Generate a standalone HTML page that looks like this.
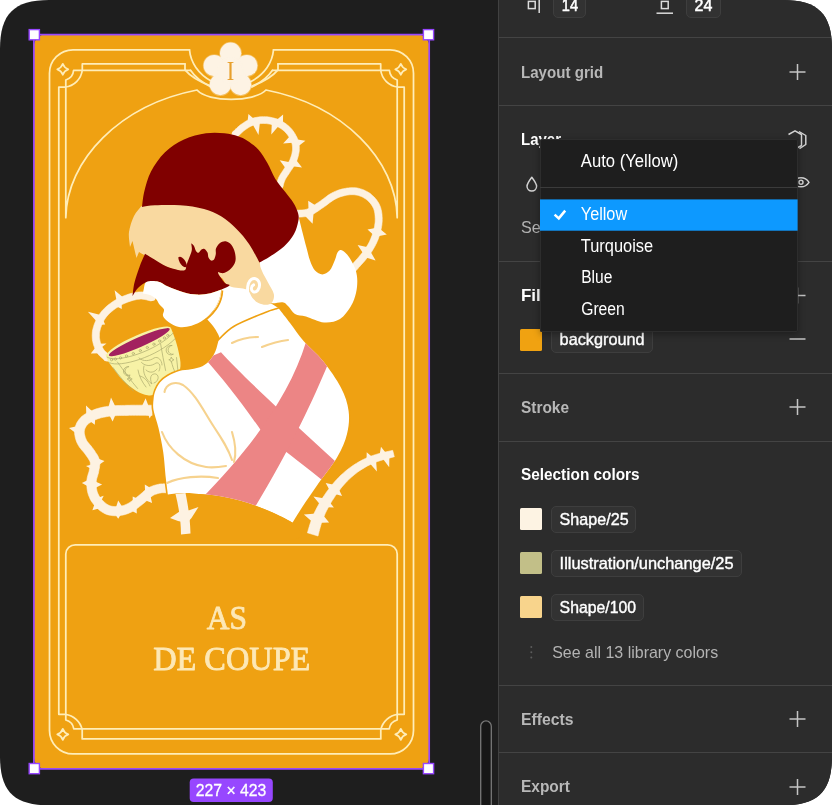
<!DOCTYPE html>
<html lang="en">
<head>
<meta charset="utf-8">
<title>Figma – Layer mode dropdown</title>
<style>
html,body{margin:0;padding:0;background:#fff;}
body{width:833px;height:806px;overflow:hidden;position:relative;font-family:"Liberation Sans",Arial,sans-serif;}
#win{position:absolute;left:0;top:0;width:832px;height:805.3px;background:#1e1e1e;overflow:hidden;clip-path:path('M49 0 H783 C818 0 832 14 832 49 V756.3 C832 791.3 818 805.3 783 805.3 H49 C14 805.3 0 791.3 0 756.3 V49 C0 14 14 0 49 0Z');}
#panel{position:absolute;left:497.5px;top:0;width:335px;height:805px;background:#2c2c2c;border-left:1.4px solid #414141;box-sizing:border-box;}
.hr{position:absolute;left:499px;width:333px;height:1px;background:#444;}
.t{position:absolute;white-space:nowrap;line-height:20px;height:20px;font-size:15px;letter-spacing:-0.1px;}
.b{font-weight:bold;}
.dim{color:#b3b3b3;}
.wh{color:#fff;}
.plus{position:absolute;width:15px;height:15px;}
.plus:before{content:"";position:absolute;left:0;top:7px;width:15px;height:1.4px;background:#c8c8c8;}
.plus:after{content:"";position:absolute;left:7px;top:0;width:1.4px;height:15px;background:#c8c8c8;}
.minus{position:absolute;width:15px;height:1.4px;background:#c8c8c8;}
.chip{position:absolute;height:25px;border:1px solid #3e3e3e;border-radius:5px;box-sizing:content-box;background:#323232;}
.sw{position:absolute;width:22.4px;height:22px;border-radius:1.5px;}
#dd{position:absolute;left:540px;top:139px;width:257.6px;height:193.4px;background:#1e1e1e;border-radius:2px;box-shadow:0 2px 7px rgba(0,0,0,.35), inset 0 0 0 1px #2d2d2d;}
</style>
</head>
<body>
<div id="win">

<!-- ===== canvas: card ===== -->
<svg id="card" style="position:absolute;left:0;top:0;will-change:transform" width="498" height="805" viewBox="0 0 498 805">
  <rect x="33.9" y="34.6" width="395.3" height="734.3" rx="11.5" fill="#efa112"/>
  <!--FRAME-START-->
  <!-- frame ornaments -->
  <g id="frame" fill="none" stroke="#ffedb8" stroke-width="1.75" stroke-linejoin="round" stroke-linecap="round">
    <!-- outer line with dip under flower -->
    <path d="M189.5 49.8 H73 A23.5 23.5 0 0 0 49.5 73.3 V730.4 A23.5 23.5 0 0 0 73 753.9 H390 A23.5 23.5 0 0 0 413.5 730.4 V73.3 A23.5 23.5 0 0 0 390 49.8 H273.5"/>
    <path d="M189.5 49.8 C190.5 62 198 74 212 81.5"/>
    <path d="M273.5 49.8 C272.5 62 265 74 251 81.5"/>
    <!-- line A (outer of the double) -->
    <path d="M185 63.9 H82.3 V70 A19.4 19.4 0 0 1 65 87 H58.8 V714.3 H65.4 A20 20 0 0 1 82.2 729.5 V738.9 H380.8 V729.5 A20 20 0 0 1 397.6 714.3 H404.2 V87 H398 A19.4 19.4 0 0 1 380.7 70 V63.9 H278"/>
    <path d="M185 63.9 V69.9 Q193 79.5 211 86"/>
    <path d="M278 63.9 V69.9 Q270 79.5 252 86"/>
    <!-- line B (inner of the double) top part + arch -->
    <path d="M190.5 70.3 H73.6 A11 11 0 0 1 65.8 80 V217.7 C66.5 160 120 105 197 90 C208 102.5 254 102.5 266 90 C343 105 396.5 160 397.2 217.7 V80 A11 11 0 0 1 389.4 70.3 H272.5"/>
    <path d="M190.5 70.3 Q197 80 211 87"/>
    <path d="M272.5 70.3 Q266 80 252 87"/>
    <!-- text box + bottom part of line B -->
    <path d="M73.8 728.8 A11 11 0 0 0 65.8 720 V554 A9.5 9.5 0 0 1 75.3 544.8 H387.7 A9.5 9.5 0 0 1 397.2 554 V720 A11 11 0 0 0 389.2 728.8 Z"/>
    <!-- corner diamonds -->
    <path id="dia" d="M62.8 63.8 Q64.2 67.9 68.3 69.3 Q64.2 70.7 62.8 74.8 Q61.4 70.7 57.3 69.3 Q61.4 67.9 62.8 63.8Z"/>
    <use href="#dia" x="338"/>
    <use href="#dia" y="665.1"/>
    <use href="#dia" x="338" y="665.1"/>
  </g>
  <!-- flower badge -->
  <g fill="#fdf3e4" stroke="#fdf3e4" stroke-opacity="0.35" stroke-width="1.6">
    <circle cx="230.6" cy="53.2" r="10.6"/>
    <circle cx="246.8" cy="65.6" r="10.6"/>
    <circle cx="240.6" cy="84.6" r="10.6"/>
    <circle cx="220.4" cy="84.6" r="10.6"/>
    <circle cx="214.2" cy="65.6" r="10.6"/>
    <circle cx="230.6" cy="70.5" r="12.5"/>
  </g>
  <text x="230.4" y="80" text-anchor="middle" font-family="Liberation Serif, Times New Roman, serif" font-size="27.5" fill="#e8a02c" textLength="7.5" lengthAdjust="spacingAndGlyphs">I</text>
  <!-- title -->
  <g font-family="Liberation Serif, Times New Roman, serif" font-size="34.6" fill="#fde8b6" stroke="#fde8b6" stroke-width="0.85" stroke-linejoin="round">
    <text x="206.8" y="628.8" textLength="40.2" lengthAdjust="spacingAndGlyphs">AS</text>
    <text x="153.2" y="670.3" textLength="157.2" lengthAdjust="spacingAndGlyphs">DE COUPE</text>
  </g>
<!--FRAME-END-->
<!--FIG-START-->
<path d="M237.3 137.0 L238.0 136.4 L238.8 135.6 L239.7 134.7 L240.7 133.7 L241.7 132.7 L242.8 131.7 L243.9 130.8 L244.9 130.1 L246.0 129.3 L247.1 128.5 L248.2 127.8 L249.4 127.1 L250.5 126.4 L251.6 125.9 L252.8 125.4 L253.9 124.9 L255.2 124.6 L256.5 124.2 L257.9 124.0 L259.3 123.7 L260.8 123.6 L262.2 123.5 L263.6 123.5 L265.0 123.5 L266.4 123.6 L267.9 123.8 L269.3 124.0 L270.7 124.3 L272.2 124.7 L273.6 125.1 L274.9 125.5 L276.2 126.0 L277.4 126.6 L278.6 127.2 L279.8 127.9 L281.0 128.6 L282.1 129.4 L283.1 130.2 L284.1 131.1 L285.1 132.0 L286.0 133.0 L286.9 134.0 L287.7 135.1 L288.5 136.3 L289.3 137.5 L290.0 138.6 L290.6 139.8 L291.1 140.9 L291.5 142.0 L291.8 143.0 L292.1 144.1 L292.3 145.1 L292.4 146.2 L292.5 147.3 L292.5 148.4 L292.5 149.5 L292.4 150.7 L292.2 151.9 L292.0 153.2 L291.7 154.5 L291.3 155.8 L290.9 157.1 L290.4 158.3 L290.0 159.5 L289.5 160.5 L289.0 161.5 L288.3 162.5 L287.7 163.5 L286.9 164.6 L286.2 165.7 L285.4 166.8 L284.6 168.0 L283.9 169.1 L283.2 170.2 L282.4 171.3 L281.7 172.5 L280.9 173.6 L280.2 174.8 L279.5 176.0 L278.8 177.2 L278.3 178.5 L277.8 179.7 L277.5 180.9 L277.2 182.1 L276.9 183.1 L276.7 184.0 L276.5 184.6 L276.4 185.2 L283.0 186.8 L283.1 186.3 L283.3 185.5 L283.5 184.6 L283.7 183.7 L284.0 182.8 L284.3 181.9 L284.6 181.0 L285.0 180.2 L285.4 179.3 L286.0 178.3 L286.6 177.3 L287.3 176.2 L288.1 175.1 L288.8 174.0 L289.6 172.8 L290.4 171.6 L291.0 170.6 L291.8 169.6 L292.5 168.5 L293.3 167.3 L294.1 166.2 L294.8 164.9 L295.6 163.6 L296.2 162.1 L296.8 160.7 L297.3 159.2 L297.8 157.7 L298.2 156.2 L298.6 154.6 L298.9 153.0 L299.2 151.4 L299.3 149.9 L299.3 148.4 L299.3 146.9 L299.2 145.5 L299.0 144.0 L298.7 142.6 L298.3 141.2 L297.9 139.7 L297.3 138.3 L296.7 136.8 L295.9 135.4 L295.1 133.9 L294.2 132.5 L293.2 131.1 L292.2 129.7 L291.1 128.4 L289.9 127.2 L288.7 126.1 L287.4 125.0 L286.1 123.9 L284.7 123.0 L283.3 122.1 L281.9 121.2 L280.4 120.5 L278.8 119.8 L277.3 119.1 L275.6 118.6 L273.9 118.1 L272.2 117.7 L270.5 117.3 L268.8 117.0 L267.1 116.8 L265.4 116.7 L263.6 116.7 L261.9 116.7 L260.2 116.8 L258.5 117.0 L256.8 117.3 L255.1 117.6 L253.4 118.0 L251.9 118.5 L250.3 119.0 L248.7 119.7 L247.3 120.4 L245.9 121.2 L244.6 122.0 L243.3 122.9 L242.1 123.7 L240.9 124.5 L239.6 125.5 L238.4 126.6 L237.1 127.7 L236.0 128.8 L234.9 129.8 L234.0 130.8 L233.2 131.5 L232.7 132.0Z" fill="#fdf2e2" stroke="#fdf2e2" stroke-width="0.6" stroke-linejoin="round"/>
<path d="M255.7 120.5 L248.4 113.9 L247.3 123.9Z M282.9 125.5 L283.1 114.5 L274.8 121.6Z M296.4 147.7 L305.4 140.7 L294.4 138.9Z M290.5 166.0 L302.0 167.5 L294.6 158.0Z M260.2 119.9 L258.5 135.1 L251.4 121.9Z M280.3 123.9 L271.3 134.6 L271.9 120.8Z M295.6 142.4 L283.1 143.5 L291.7 134.3Z M287.1 170.2 L279.7 160.3 L292.3 162.8Z" fill="#fdf2e2"/>
<circle cx="235.0" cy="134.5" r="3.4" fill="#fdf2e2"/><circle cx="279.7" cy="186.0" r="3.4" fill="#fdf2e2"/>
<path d="M296.4 217.3 L297.2 217.2 L298.4 217.2 L300.0 217.1 L301.8 217.0 L303.7 216.8 L305.7 216.6 L307.8 216.2 L309.8 215.6 L311.6 214.8 L313.4 214.0 L315.1 213.0 L316.7 211.9 L318.3 210.9 L319.9 209.8 L321.4 208.7 L322.9 207.7 L324.6 206.6 L326.2 205.4 L327.8 204.2 L329.3 203.0 L330.8 201.9 L332.3 200.9 L333.7 200.0 L335.0 199.2 L336.5 198.5 L337.9 197.8 L339.3 197.2 L340.7 196.7 L342.2 196.3 L343.6 195.9 L345.0 195.5 L346.4 195.2 L347.8 195.0 L349.3 194.8 L350.7 194.7 L352.1 194.7 L353.5 194.7 L354.8 194.8 L356.1 195.0 L357.4 195.2 L358.7 195.6 L360.0 196.0 L361.3 196.5 L362.5 197.1 L363.8 197.8 L365.0 198.5 L366.1 199.3 L367.2 200.1 L368.1 201.0 L369.1 201.9 L370.0 202.9 L370.9 204.0 L371.7 205.2 L372.4 206.3 L373.0 207.5 L373.6 208.6 L374.0 209.8 L374.4 211.1 L374.6 212.4 L374.9 213.8 L375.0 215.3 L375.1 216.7 L375.2 218.2 L375.2 219.7 L375.2 221.1 L375.1 222.5 L374.9 223.9 L374.7 225.3 L374.5 226.8 L374.2 228.2 L373.8 229.7 L373.4 231.2 L373.0 232.6 L372.5 234.1 L372.0 235.6 L371.4 237.1 L370.8 238.6 L370.2 240.0 L369.5 241.5 L368.8 242.9 L368.1 244.2 L367.3 245.6 L366.4 246.9 L365.5 248.3 L364.6 249.6 L363.6 250.9 L362.6 252.3 L361.6 253.6 L360.6 254.8 L359.5 256.1 L358.4 257.4 L357.3 258.7 L356.1 260.0 L355.0 261.2 L354.0 262.3 L353.2 263.3 L352.4 264.2 L351.8 264.9 L351.2 265.6 L350.7 266.1 L350.3 266.6 L349.9 267.1 L349.6 267.4 L349.3 267.7 L354.7 272.3 L354.9 272.0 L355.2 271.6 L355.6 271.2 L356.0 270.7 L356.5 270.1 L357.1 269.5 L357.7 268.7 L358.4 267.9 L359.3 267.0 L360.2 265.9 L361.3 264.7 L362.5 263.4 L363.7 262.1 L364.9 260.7 L366.1 259.2 L367.2 257.8 L368.2 256.5 L369.2 255.1 L370.3 253.7 L371.3 252.2 L372.3 250.8 L373.2 249.2 L374.1 247.7 L375.0 246.1 L375.8 244.5 L376.6 242.9 L377.3 241.3 L378.0 239.7 L378.6 238.0 L379.2 236.3 L379.7 234.7 L380.2 233.0 L380.6 231.4 L381.0 229.8 L381.3 228.1 L381.6 226.5 L381.9 224.8 L382.0 223.1 L382.2 221.4 L382.2 219.7 L382.2 218.0 L382.1 216.4 L382.0 214.6 L381.8 212.9 L381.5 211.1 L381.1 209.4 L380.7 207.7 L380.0 206.0 L379.3 204.3 L378.5 202.8 L377.5 201.3 L376.5 199.8 L375.4 198.4 L374.2 197.1 L372.9 195.9 L371.6 194.7 L370.3 193.6 L368.8 192.6 L367.3 191.7 L365.7 190.9 L364.0 190.1 L362.4 189.4 L360.7 188.9 L359.0 188.4 L357.3 188.0 L355.5 187.8 L353.8 187.7 L352.0 187.7 L350.3 187.7 L348.6 187.9 L346.9 188.1 L345.2 188.4 L343.5 188.7 L341.8 189.1 L340.1 189.6 L338.5 190.1 L336.8 190.7 L335.1 191.4 L333.4 192.2 L331.8 193.0 L330.0 194.0 L328.3 195.1 L326.7 196.3 L325.1 197.5 L323.5 198.7 L322.0 199.8 L320.5 200.9 L319.1 201.9 L317.5 202.9 L315.9 204.0 L314.4 205.1 L312.9 206.1 L311.4 207.0 L310.0 207.8 L308.7 208.5 L307.4 209.0 L306.1 209.4 L304.6 209.7 L303.0 209.9 L301.3 210.0 L299.7 210.1 L298.1 210.2 L296.8 210.2 L295.6 210.3Z" fill="#fdf2e2" stroke="#fdf2e2" stroke-width="0.6" stroke-linejoin="round"/>
<path d="M318.0 207.1 L308.2 200.8 L308.6 212.8Z M313.8 210.4 L312.6 223.8 L303.4 214.2Z M375.5 236.7 L386.8 234.6 L378.1 227.5Z M375.5 236.7 L367.5 229.6 L378.1 227.5Z M364.6 255.5 L357.6 245.1 L370.2 247.8Z M363.6 256.8 L375.6 260.6 L369.2 249.2Z" fill="#fdf2e2"/>
<circle cx="296.0" cy="213.8" r="3.5" fill="#fdf2e2"/><circle cx="352.0" cy="270.0" r="3.5" fill="#fdf2e2"/>
<path d="M152.6 294.0 L152.0 293.8 L150.8 293.5 L149.4 293.2 L147.8 292.8 L146.1 292.4 L144.2 292.1 L142.3 291.9 L140.4 291.9 L138.6 292.0 L136.9 292.2 L135.1 292.5 L133.4 292.9 L131.6 293.3 L129.8 293.8 L128.1 294.3 L126.4 294.9 L124.7 295.6 L122.9 296.3 L121.2 297.0 L119.4 297.9 L117.6 298.8 L115.9 299.7 L114.2 300.7 L112.6 301.8 L111.0 302.9 L109.4 304.1 L107.8 305.3 L106.3 306.6 L104.8 308.0 L103.3 309.4 L101.9 310.9 L100.7 312.5 L99.5 314.2 L98.3 315.9 L97.3 317.6 L96.4 319.5 L95.5 321.3 L94.8 323.1 L94.1 324.8 L93.6 326.5 L93.1 328.2 L92.7 329.9 L92.4 331.6 L92.3 333.2 L92.2 334.8 L92.2 336.5 L92.3 338.1 L92.4 339.7 L92.7 341.3 L93.1 343.0 L93.5 344.7 L94.1 346.3 L94.7 347.9 L95.4 349.5 L96.1 351.0 L96.9 352.4 L98.0 353.9 L99.1 355.2 L100.3 356.5 L101.5 357.6 L102.7 358.6 L103.6 359.5 L104.4 360.1 L105.0 360.7 L109.8 355.3 L109.2 354.8 L108.3 354.0 L107.4 353.2 L106.4 352.3 L105.4 351.4 L104.4 350.4 L103.7 349.5 L103.1 348.6 L102.5 347.6 L101.9 346.4 L101.4 345.2 L100.9 343.9 L100.4 342.6 L100.1 341.3 L99.8 340.0 L99.6 338.7 L99.4 337.5 L99.4 336.2 L99.4 335.0 L99.4 333.8 L99.6 332.6 L99.8 331.3 L100.1 330.0 L100.4 328.7 L100.9 327.2 L101.5 325.7 L102.1 324.2 L102.8 322.6 L103.6 321.1 L104.5 319.6 L105.4 318.2 L106.3 316.9 L107.4 315.7 L108.5 314.4 L109.7 313.2 L111.0 312.1 L112.4 310.9 L113.8 309.8 L115.2 308.8 L116.6 307.8 L118.0 306.9 L119.5 306.0 L121.0 305.1 L122.6 304.3 L124.1 303.6 L125.7 302.9 L127.3 302.3 L128.8 301.7 L130.4 301.2 L131.9 300.7 L133.4 300.3 L134.9 299.9 L136.4 299.6 L137.9 299.3 L139.3 299.2 L140.6 299.1 L141.8 299.1 L143.2 299.3 L144.8 299.5 L146.3 299.8 L147.7 300.2 L149.1 300.5 L150.3 300.8 L151.4 301.0Z" fill="#fdf2e2" stroke="#fdf2e2" stroke-width="0.6" stroke-linejoin="round"/>
<path d="M117.0 303.1 L114.6 290.2 L125.0 299.1Z M113.8 305.1 L121.8 308.9 L121.6 300.6Z M98.3 323.3 L87.9 311.8 L102.6 315.4Z M97.6 325.1 L105.2 324.5 L101.6 317.0Z M101.4 353.2 L90.8 353.6 L97.2 345.3Z M99.2 349.3 L106.5 343.5 L96.9 343.8Z" fill="#fdf2e2"/>
<circle cx="152.0" cy="297.5" r="3.6" fill="#fdf2e2"/><circle cx="107.4" cy="358.0" r="3.6" fill="#fdf2e2"/>
<path d="M152.1 405.2 L150.4 405.2 L148.0 405.2 L145.2 405.2 L142.0 405.2 L138.7 405.2 L135.4 405.2 L132.3 405.2 L129.4 405.3 L126.8 405.3 L124.3 405.4 L121.7 405.4 L119.2 405.5 L116.7 405.6 L114.3 405.7 L111.9 405.9 L109.6 406.2 L107.4 406.4 L105.3 406.8 L103.3 407.1 L101.3 407.6 L99.4 408.0 L97.5 408.6 L95.7 409.1 L93.9 409.8 L92.1 410.5 L90.4 411.2 L88.7 412.0 L87.0 412.9 L85.4 413.9 L83.8 414.9 L82.3 416.1 L80.9 417.3 L79.7 418.7 L78.6 420.1 L77.6 421.6 L76.7 423.1 L76.0 424.8 L75.4 426.4 L75.0 428.2 L74.7 429.9 L74.6 431.8 L74.6 433.7 L74.9 435.5 L75.2 437.2 L75.7 439.0 L76.2 440.7 L76.8 442.3 L77.5 443.8 L78.5 445.6 L79.5 447.2 L80.6 448.6 L81.7 449.9 L82.7 451.1 L83.7 452.2 L84.5 453.2 L85.2 454.2 L86.1 455.4 L87.0 456.7 L87.8 457.8 L88.5 458.9 L89.1 459.9 L89.6 460.8 L90.0 461.6 L90.2 462.2 L90.3 462.9 L90.3 463.5 L90.3 464.3 L90.2 465.3 L90.0 466.3 L89.8 467.4 L89.6 468.7 L89.3 470.0 L89.2 470.9 L88.9 471.9 L88.6 472.9 L88.2 474.1 L87.8 475.4 L87.4 476.9 L87.1 478.4 L86.9 480.1 L86.8 481.6 L86.8 483.2 L86.8 484.8 L86.9 486.4 L87.0 488.1 L87.2 489.7 L87.5 491.4 L87.9 493.0 L88.3 494.5 L88.9 496.0 L89.5 497.5 L90.1 498.9 L90.9 500.4 L91.7 501.7 L92.7 503.1 L93.7 504.4 L94.8 505.7 L96.0 507.0 L97.3 508.3 L98.7 509.5 L100.1 510.7 L101.7 511.8 L103.3 512.8 L105.0 513.7 L106.7 514.4 L108.4 514.9 L110.2 515.3 L111.9 515.6 L113.6 515.7 L115.3 515.8 L116.9 515.7 L118.5 515.7 L120.2 515.5 L121.8 515.2 L123.5 514.9 L125.1 514.5 L126.7 514.0 L128.3 513.4 L129.9 512.7 L131.5 512.0 L133.2 511.0 L134.9 510.0 L136.4 508.9 L138.0 507.7 L139.5 506.6 L140.9 505.5 L142.2 504.4 L143.5 503.4 L145.0 502.2 L146.3 501.0 L147.6 499.9 L148.7 498.8 L149.9 497.8 L150.9 497.0 L151.9 496.2 L152.7 495.7 L153.7 495.1 L154.7 494.6 L155.7 494.2 L156.8 493.9 L157.8 493.6 L158.9 493.3 L159.9 493.1 L161.0 492.9 L161.8 492.7 L162.8 492.7 L163.9 492.7 L165.0 492.7 L166.1 492.8 L167.2 492.8 L168.1 492.9 L168.8 492.9 L169.2 484.1 L168.6 484.1 L167.7 484.0 L166.6 484.0 L165.4 483.9 L164.0 483.8 L162.5 483.9 L161.0 483.9 L159.4 484.1 L158.1 484.4 L156.8 484.7 L155.5 485.0 L154.1 485.4 L152.6 485.9 L151.2 486.5 L149.7 487.2 L148.3 487.9 L146.7 488.9 L145.3 490.0 L144.0 491.1 L142.8 492.2 L141.5 493.3 L140.4 494.3 L139.2 495.3 L138.1 496.2 L136.7 497.3 L135.3 498.4 L133.9 499.5 L132.5 500.6 L131.2 501.5 L129.9 502.4 L128.6 503.2 L127.5 503.8 L126.2 504.4 L125.0 504.9 L123.8 505.4 L122.6 505.7 L121.4 506.0 L120.2 506.3 L119.1 506.4 L117.9 506.5 L116.6 506.6 L115.4 506.6 L114.2 506.6 L113.0 506.4 L111.9 506.3 L110.8 506.0 L109.8 505.7 L108.8 505.3 L107.9 504.8 L106.9 504.2 L105.8 503.4 L104.7 502.5 L103.7 501.5 L102.7 500.5 L101.7 499.5 L100.9 498.6 L100.2 497.6 L99.6 496.7 L99.0 495.8 L98.5 494.8 L98.0 493.8 L97.6 492.7 L97.2 491.7 L96.9 490.6 L96.7 489.5 L96.5 488.4 L96.3 487.1 L96.2 485.9 L96.2 484.6 L96.2 483.3 L96.2 482.1 L96.3 480.9 L96.4 480.0 L96.6 479.1 L96.9 478.1 L97.2 477.0 L97.6 475.8 L98.0 474.5 L98.4 473.1 L98.7 471.6 L98.9 470.5 L99.1 469.3 L99.4 468.0 L99.6 466.6 L99.8 465.1 L99.8 463.5 L99.7 461.8 L99.4 460.0 L98.9 458.2 L98.2 456.6 L97.4 455.1 L96.5 453.7 L95.6 452.4 L94.8 451.1 L94.0 450.0 L93.2 448.8 L92.1 447.4 L91.1 446.0 L90.0 444.8 L89.0 443.6 L88.1 442.5 L87.3 441.5 L86.7 440.6 L86.3 439.8 L85.8 438.6 L85.3 437.4 L85.0 436.2 L84.7 435.1 L84.4 433.9 L84.3 432.8 L84.3 431.9 L84.3 431.1 L84.5 430.2 L84.7 429.3 L85.0 428.4 L85.5 427.5 L85.9 426.7 L86.5 425.8 L87.2 425.0 L87.9 424.3 L88.6 423.6 L89.5 422.9 L90.6 422.2 L91.8 421.5 L93.1 420.8 L94.4 420.2 L95.9 419.6 L97.3 419.0 L98.8 418.5 L100.3 418.0 L101.9 417.6 L103.5 417.2 L105.2 416.9 L107.0 416.6 L108.8 416.3 L110.8 416.0 L112.8 415.8 L114.9 415.7 L117.2 415.6 L119.5 415.5 L121.9 415.4 L124.4 415.4 L127.0 415.4 L129.6 415.3 L132.4 415.3 L135.5 415.3 L138.7 415.3 L142.0 415.3 L145.1 415.3 L147.9 415.4 L150.3 415.4 L152.1 415.4Z" fill="#fdf2e2" stroke="#fdf2e2" stroke-width="0.6" stroke-linejoin="round"/>
<path d="M107.4 411.3 L111.0 397.4 L117.3 410.4Z M140.1 410.2 L145.6 398.2 L150.1 410.3Z M86.4 418.6 L86.0 405.5 L95.4 414.2Z M107.4 411.3 L112.6 421.6 L117.3 410.4Z M86.4 418.6 L94.8 424.8 L95.4 414.2Z M146.8 410.3 L149.7 418.4 L153.8 410.3Z M78.9 435.5 L69.0 428.1 L80.1 425.5Z M95.6 467.3 L104.5 461.1 L94.4 457.3Z M94.1 470.6 L86.0 466.0 L95.3 463.7Z M91.4 488.2 L81.9 482.9 L91.5 478.3Z M91.6 489.7 L102.1 484.5 L91.4 479.7Z M99.5 504.2 L103.7 495.8 L95.1 498.8Z M102.8 507.4 L92.4 510.3 L95.8 500.2Z M123.2 510.7 L118.2 518.8 L113.2 511.5Z M124.6 510.4 L118.2 500.4 L114.6 511.6Z M140.6 500.0 L132.7 496.6 L132.7 506.1Z M136.5 503.5 L136.8 513.5 L128.2 509.0Z M153.4 489.7 L144.8 484.5 L145.2 495.4Z M149.5 492.1 L152.1 503.1 L142.0 498.9Z" fill="#fdf2e2"/>
<circle cx="169.0" cy="488.5" r="4.4" fill="#fdf2e2"/>
<path d="M175.5 494 L185.5 493 C187.5 503 190 516 190.5 533.6 L181 534.4 C181 522 179 508 175.5 494Z" fill="#fdf2e2"/>
<path d="M170 518 L181 510.5 L182.5 501 L188.5 510.5 L198.5 507 L191.5 518 L187 523 L178 521Z" fill="#fdf2e2"/>
<path d="M318.0 536.0 L318.3 534.8 L318.7 533.3 L319.1 531.6 L319.6 529.7 L320.1 527.7 L320.7 525.7 L321.2 523.9 L321.7 522.3 L322.3 520.8 L322.8 519.3 L323.4 517.8 L324.0 516.4 L324.6 515.0 L325.2 513.6 L325.9 512.1 L326.7 510.5 L327.5 508.9 L328.4 507.3 L329.3 505.6 L330.2 504.0 L331.2 502.3 L332.2 500.6 L333.3 499.0 L334.4 497.3 L335.5 495.6 L336.7 493.9 L338.0 492.1 L339.3 490.4 L340.6 488.7 L341.9 487.0 L343.3 485.4 L344.6 483.9 L346.0 482.4 L347.3 481.0 L348.8 479.6 L350.2 478.3 L351.6 477.0 L353.1 475.7 L354.6 474.5 L356.1 473.3 L357.7 472.1 L359.2 471.0 L360.9 469.9 L362.5 468.9 L364.2 467.9 L365.8 466.9 L367.4 466.0 L369.0 465.2 L370.5 464.5 L371.9 463.8 L373.3 463.2 L374.7 462.6 L376.1 462.1 L377.6 461.5 L379.1 461.0 L380.7 460.5 L382.3 460.0 L384.2 459.4 L386.1 458.9 L388.1 458.4 L390.0 457.9 L391.7 457.5 L393.2 457.1 L394.3 456.8 L392.7 450.4 L391.7 450.6 L390.2 450.9 L388.5 451.3 L386.5 451.7 L384.5 452.2 L382.4 452.7 L380.4 453.2 L378.5 453.7 L376.9 454.2 L375.3 454.7 L373.7 455.2 L372.2 455.7 L370.6 456.3 L369.0 456.9 L367.3 457.6 L365.6 458.4 L363.9 459.2 L362.1 460.1 L360.3 461.1 L358.5 462.1 L356.7 463.2 L354.8 464.3 L353.0 465.5 L351.3 466.7 L349.6 467.9 L347.9 469.2 L346.2 470.6 L344.6 471.9 L343.0 473.4 L341.3 474.8 L339.8 476.3 L338.2 477.9 L336.7 479.5 L335.1 481.2 L333.6 483.0 L332.1 484.8 L330.7 486.6 L329.3 488.4 L327.9 490.2 L326.6 491.9 L325.4 493.7 L324.2 495.5 L323.0 497.2 L321.9 499.0 L320.8 500.8 L319.8 502.5 L318.8 504.2 L317.9 505.9 L317.0 507.5 L316.2 509.1 L315.4 510.7 L314.6 512.2 L313.9 513.8 L313.2 515.4 L312.5 517.0 L311.9 518.7 L311.2 520.6 L310.5 522.6 L309.8 524.7 L309.2 526.8 L308.6 528.7 L308.1 530.4 L307.7 531.9 L307.4 532.8Z" fill="#fdf2e2" stroke="#fdf2e2" stroke-width="0.6" stroke-linejoin="round"/>
<path d="M319.6 513.3 L303.9 514.4 L315.3 524.5Z M320.3 511.8 L329.1 522.6 L315.8 522.9Z M327.6 498.9 L313.4 496.6 L322.6 507.5Z M327.3 499.3 L333.9 507.6 L322.8 507.1Z M337.4 485.4 L325.7 483.0 L331.3 493.3Z M337.1 485.8 L342.1 496.0 L331.6 492.9Z M374.3 458.7 L366.7 452.3 L366.5 462.0Z M375.9 458.2 L376.9 471.4 L368.0 461.3Z M387.4 455.0 L381.0 446.8 L379.2 457.1Z M389.4 454.5 L389.2 467.3 L381.2 456.6Z" fill="#fdf2e2"/>

<path d="M105.5 354.5 C106.0 355.8 106.8 358.8 108.0 361.0 C109.2 363.2 110.5 364.7 113.0 368.0 C115.5 371.3 119.2 376.8 123.0 380.6 C126.8 384.4 131.9 388.3 136.0 390.7 C140.1 393.1 144.3 394.6 147.6 395.2 C150.9 395.8 152.9 395.2 156.0 394.0 C159.1 392.8 162.7 390.3 166.0 388.0 C169.3 385.7 173.6 383.7 176.0 380.0 C178.4 376.3 180.1 370.7 180.5 366.0 C180.9 361.3 179.5 356.3 178.6 351.8 C177.7 347.3 176.3 342.7 175.0 338.8 C173.7 334.9 171.8 330.3 171.0 328.2 C167.2 330.8 159.2 337.4 152.0 341.0 C144.8 344.6 135.8 347.8 128.0 350.0 C120.2 352.2 110.0 353.6 105.5 354.5Z" fill="#f7f2a6"/>
<ellipse cx="138.6" cy="342" rx="35.2" ry="6.9" transform="rotate(-23.7 138.6 342)" fill="#f7f2a6"/>
<ellipse cx="139.3" cy="342.2" rx="33.2" ry="4.9" transform="rotate(-23.7 139.3 342.2)" fill="#a3215f"/>
<g fill="none" stroke="#b0af72" stroke-width="0.75" stroke-linecap="round"><path d="M107.2 357.2 C116 363.5 156 351.5 173 333.2"/><path d="M109.6 362.8 C120 368 158 356.5 175.2 338.6"/><circle cx="111.6" cy="359.7" r="1.15"/><circle cx="115.4" cy="359.1" r="1.15"/><circle cx="120.5" cy="357.9" r="1.15"/><circle cx="126.5" cy="356.0" r="1.15"/><circle cx="133.3" cy="353.5" r="1.15"/><circle cx="140.3" cy="350.6" r="1.15"/><circle cx="147.3" cy="347.5" r="1.15"/><circle cx="153.9" cy="344.2" r="1.15"/><circle cx="159.7" cy="341.0" r="1.15"/><circle cx="164.4" cy="338.0" r="1.15"/><circle cx="167.8" cy="335.4" r="1.15"/><path d="M128.6 366.6 a4.6 4.6 0 1 0 1.6 8.6 a3.4 3.4 0 1 1 -1.6 -8.6Z"/><path d="M171.8 345.4 a4.8 4.8 0 1 0 1.6 8.8 a3.5 3.5 0 1 1 -1.6 -8.8Z"/><path d="M129.6 376.6 l0.9 1.7 l1.7 0.7 l-1.7 0.7 l-0.9 1.7 l-0.9 -1.7 l-1.7 -0.7 l1.7 -0.7Z M171.4 357.4 l0.9 1.7 l1.7 0.7 l-1.7 0.7 l-0.9 1.7 l-0.9 -1.7 l-1.7 -0.7 l1.7 -0.7Z"/><path d="M117.4 362 C124 371 131 381 137.6 388.5 M113 367.6 C119 376 126 384 133.2 390.7 M160.6 344 C162 353 164 362 165.6 370.5 M176.5 357.6 C177 362 177.5 366 177.9 370.5 M171.5 362 C172.5 366 173.5 369 175 372"/><path d="M139 358 C143 362 150 361 154 358 C158 356 162 360 162 365 M141.5 362.5 C146 367 152 366 156 363 C160 362 161 367 159 371 M146 370 C150 374 155 372 157 369 M144 366 C142 372 146 380 152 384 C149 378 151 373 156 374 C160 376 158 382 154 383 M150 386 C148 381 144 377 140 376 M138 370 C139 376 142 382 146 387"/></g>
<path d="M255.0 250.0 C258.7 239.8 272.8 241.0 280.0 235.0 C287.2 229.0 294.4 218.2 298.0 214.0 C298.9 217.6 301.0 226.5 302.4 232.0 C303.8 237.5 305.0 242.2 306.3 247.0 C307.6 251.8 308.6 256.7 310.0 260.6 C311.4 264.5 312.9 268.3 315.0 270.6 C317.1 272.9 319.9 274.5 322.3 274.5 C324.8 274.5 327.6 272.9 329.7 270.6 C331.8 268.3 333.4 263.6 334.7 260.6 C336.0 257.6 336.4 254.3 337.5 252.5 C338.6 250.7 339.4 249.7 341.0 250.0 C342.6 250.3 345.3 252.4 347.1 254.4 C348.9 256.4 350.6 259.3 352.0 262.0 C353.4 264.7 354.9 267.4 355.8 270.6 C356.7 273.8 357.3 277.3 357.3 281.0 C357.3 284.7 357.1 288.8 356.0 293.0 C354.9 297.2 353.7 301.7 351.0 306.0 C348.3 310.3 344.5 316.2 340.0 319.0 C335.5 321.8 329.7 322.9 324.0 322.5 C318.3 322.1 310.8 317.9 306.0 316.5 C301.2 315.1 298.0 315.8 295.0 314.0 C292.0 312.2 290.1 307.9 288.0 306.0 C285.9 304.1 285.5 302.8 282.5 302.3 C279.5 301.8 274.1 304.1 270.0 303.0 C265.9 301.9 260.5 304.8 258.0 296.0 C255.5 287.2 251.3 260.2 255.0 250.0Z" fill="#ffffff"/>
<path d="M222.2 288.0 C223.8 287.2 227.0 284.7 230.0 284.0 C233.0 283.3 236.7 283.3 240.0 284.0 C243.3 284.7 246.3 285.3 250.0 288.0 C253.7 290.7 258.3 297.3 262.0 300.0 C265.7 302.7 269.2 302.6 272.0 304.0 C274.8 305.4 277.6 307.6 279.0 308.5 C275.2 310.0 266.5 312.9 260.0 316.0 C253.5 319.1 246.6 323.0 240.0 327.0 C233.4 331.0 224.2 337.4 220.3 340.0 C219.8 338.8 219.2 336.3 218.0 334.0 C216.8 331.7 214.9 328.5 213.0 326.0 C211.1 323.5 208.0 320.4 206.8 319.0 C208.2 317.2 212.0 313.2 214.0 310.0 C216.0 306.8 217.6 303.7 219.0 300.0 C220.4 296.3 221.6 290.4 222.2 288.0Z" fill="#ffffff"/>
<path d="M141.0 206.5 C139.6 208.4 136.0 211.8 134.0 216.0 C132.0 220.2 129.7 226.8 129.0 232.0 C128.3 237.2 129.8 244.0 130.0 247.0 C130.5 245.8 132.0 242.2 132.5 241.0 C133.3 244.4 135.7 254.6 136.5 258.0 C137.0 256.8 138.5 253.2 139.0 252.0 C140.4 252.8 140.8 253.3 146.0 256.0 C151.2 258.7 161.0 264.8 170.0 268.0 C179.0 271.2 191.7 273.5 200.0 275.0 C208.3 276.5 215.7 275.5 220.0 277.0 C224.3 278.5 223.7 282.2 226.0 284.0 C228.3 285.8 231.2 286.8 234.0 287.5 C236.8 288.2 240.6 287.9 243.0 288.5 C245.4 289.1 246.9 289.4 248.5 291.0 C250.1 292.6 250.8 296.0 252.5 298.0 C254.2 300.0 256.2 301.9 258.5 303.0 C260.8 304.1 263.8 304.9 266.0 304.8 C268.2 304.7 270.7 304.3 272.0 302.5 C273.3 300.7 274.5 297.3 273.8 294.0 C273.1 290.7 270.0 286.3 268.0 282.5 C266.0 278.7 263.3 274.4 262.0 271.0 C260.7 267.6 260.0 267.2 260.0 262.0 C260.0 256.8 265.3 250.3 262.0 240.0 C258.7 229.7 252.0 208.3 240.0 200.0 C228.0 191.7 206.5 188.9 190.0 190.0 C173.5 191.1 150.8 203.2 141.0 206.5Z" fill="#f9d9a0"/>
<path d="M247.6 293 C247.2 287 248.2 281.5 251.5 279.3 C255 277.3 259 279.5 259.5 284 C260 289 256.5 293 253.3 291.8 C250.5 290.5 251 286 253.6 284.8" fill="none" stroke="#fff" stroke-width="3" stroke-linecap="round"/>
<path d="M142.0 207.0 C142.5 203.9 142.8 197.4 144.3 191.5 C145.8 185.6 147.6 178.0 151.0 171.5 C154.4 165.0 159.5 157.6 165.0 152.3 C170.5 147.0 177.2 142.7 184.0 139.5 C190.8 136.3 199.2 134.4 206.0 133.3 C212.8 132.2 219.2 132.7 224.5 133.2 C229.8 133.7 234.2 134.9 238.0 136.2 C241.8 137.4 243.9 138.4 247.3 140.7 C250.7 142.9 255.2 146.0 258.5 149.7 C261.9 153.4 264.6 158.3 267.4 163.1 C270.2 167.9 272.2 173.9 275.2 178.7 C278.2 183.5 282.2 188.0 285.3 192.1 C288.4 196.2 291.4 199.5 293.5 203.0 C295.6 206.5 297.2 210.0 298.0 213.0 C298.8 216.0 299.0 217.5 298.3 221.0 C297.6 224.5 296.4 229.8 294.0 234.0 C291.6 238.2 288.0 242.8 284.0 246.5 C280.0 250.2 274.1 253.8 270.0 256.5 C265.9 259.2 261.6 261.3 259.5 262.5 C257.4 258.8 252.8 249.6 249.0 244.0 C245.2 238.4 241.1 233.6 236.5 229.0 C231.9 224.4 226.9 219.8 221.5 216.5 C216.1 213.2 210.9 210.9 204.0 209.0 C197.1 207.1 188.2 205.9 180.0 205.3 C171.8 204.7 161.3 205.0 155.0 205.3 C148.7 205.6 144.6 206.7 142.0 207.0Z" fill="#800000"/>
<path d="M145.0 253.8 C143.9 256.4 141.2 262.2 139.5 267.0 C137.8 271.8 135.7 277.7 134.5 282.5 C133.3 287.3 132.9 293.3 132.5 296.0 C133.6 294.4 135.6 290.3 138.0 288.0 C140.4 285.7 143.6 283.1 147.0 282.0 C150.4 280.9 155.0 280.9 158.5 281.7 C162.0 282.4 163.8 284.7 168.0 286.5 C172.2 288.3 178.7 290.9 183.5 292.3 C188.3 293.7 192.5 294.5 197.0 294.6 C201.5 294.8 206.3 294.1 210.5 293.2 C214.7 292.3 218.8 290.6 222.0 289.3 C225.2 288.0 229.0 286.4 229.5 285.3 C230.0 284.2 226.8 284.7 225.0 283.0 C223.2 281.3 220.2 276.8 219.0 275.0 C217.8 273.2 218.2 272.6 218.0 272.0 C219.2 272.2 221.8 273.6 224.0 273.0 C226.2 272.4 229.1 270.4 231.0 268.5 C232.9 266.6 234.6 264.1 235.3 261.5 C236.0 258.9 235.6 255.8 235.0 253.0 C234.4 250.2 233.1 246.9 231.5 245.0 C229.9 243.1 227.6 241.6 225.7 241.3 C223.8 241.0 221.6 241.8 220.0 243.0 C218.4 244.2 216.7 246.7 216.0 248.5 C215.3 250.3 216.1 252.2 215.8 254.0 C215.5 255.8 214.8 258.4 214.0 259.5 C213.2 260.6 211.9 260.8 211.0 260.5 C210.1 260.2 209.1 258.8 208.5 257.5 C207.9 256.2 208.2 253.9 207.5 252.5 C206.8 251.1 205.5 249.5 204.5 249.0 C203.5 248.5 202.5 248.9 201.5 249.5 C200.5 250.1 199.4 252.6 198.5 252.8 C197.6 253.1 196.8 252.1 196.0 251.0 C195.2 249.9 194.8 247.3 194.0 246.0 C193.2 244.7 191.8 243.8 191.2 243.3 C191.3 244.6 192.1 247.7 191.8 250.0 C191.5 252.3 190.4 254.5 189.5 257.0 C188.6 259.5 187.2 262.8 186.5 265.0 C185.8 267.2 186.4 269.2 185.0 270.0 C183.6 270.8 181.2 270.6 178.0 270.0 C174.8 269.4 169.9 268.1 166.0 266.3 C162.1 264.6 158.0 261.6 154.5 259.5 C151.0 257.4 146.9 254.9 145.0 253.8Z" fill="#800000"/>
<path d="M178.3 257.3 C181 254.5 187 261 187 266.5 C184 269.5 178.5 263 178.3 257.3Z" fill="#800000"/>
<path d="M146.5 282.0 C144.1 283.2 144.4 287.1 143.8 289.0 C143.2 290.9 143.2 292.6 143.0 293.5 C144.4 293.8 147.8 294.1 150.0 295.0 C152.2 295.9 154.4 297.4 156.0 299.0 C157.6 300.6 158.2 302.8 159.5 304.5 C160.8 306.2 163.4 307.6 164.0 309.5 C164.6 311.4 162.2 313.9 163.0 316.0 C163.8 318.1 165.8 320.2 168.5 322.0 C171.2 323.8 175.2 326.4 179.0 327.0 C182.8 327.6 187.3 327.0 191.5 325.8 C195.7 324.6 200.3 322.3 204.0 319.6 C207.7 316.9 211.3 313.0 213.8 309.7 C216.3 306.4 217.7 303.2 219.0 299.8 C220.3 296.4 221.0 291.6 221.5 289.5 C219.3 290.2 214.6 292.3 210.5 293.2 C206.4 294.1 201.5 294.8 197.0 294.6 C192.5 294.5 188.3 293.7 183.5 292.3 C178.7 290.9 172.2 288.3 168.0 286.5 C163.8 284.7 162.1 282.4 158.5 281.7 C154.9 280.9 148.9 280.8 146.5 282.0Z" fill="#ffffff"/>
<path d="M222.4 290.5 C222 300 217 311 205.5 320" fill="none" stroke="#efa112" stroke-width="1.8"/>
<path d="M218.4 341.0 C221.6 338.2 226.7 331.6 234.5 327.0 C242.3 322.4 258.1 316.2 265.5 313.2 C272.9 310.2 276.3 309.7 279.0 308.8 C281.2 311.6 285.8 317.6 290.0 323.0 C294.2 328.4 298.5 335.2 304.0 341.5 C309.5 347.8 316.8 353.3 323.0 361.0 C329.2 368.7 336.7 379.4 341.0 387.7 C345.3 396.0 347.6 403.3 348.6 411.0 C349.6 418.7 348.9 426.3 347.0 434.0 C345.1 441.7 342.1 448.7 337.3 457.0 C332.5 465.3 323.8 475.7 318.0 484.0 C312.2 492.3 306.6 500.6 302.3 507.0 C298.1 513.5 294.5 519.6 292.5 522.7 C289.4 521.1 283.4 517.6 277.0 514.6 C270.6 511.7 262.3 507.9 254.0 505.0 C245.7 502.1 236.0 499.3 227.0 497.5 C218.0 495.7 209.8 494.3 200.0 494.0 C190.2 493.7 174.4 495.2 168.0 495.5 C167.6 492.0 166.6 485.2 165.8 478.0 C165.0 470.8 164.4 460.3 163.2 452.0 C162.0 443.7 160.1 435.0 158.5 428.0 C156.9 421.0 154.3 414.8 153.5 410.0 C152.7 405.2 153.3 402.2 153.6 399.0 C153.9 395.8 154.4 393.2 155.5 390.5 C156.6 387.8 157.9 384.9 160.0 382.5 C162.1 380.1 164.8 377.9 168.0 376.0 C171.2 374.1 175.5 372.1 179.3 371.0 C183.1 369.9 187.2 370.1 191.0 369.3 C194.8 368.5 199.2 367.8 202.4 366.2 C205.7 364.6 208.3 362.0 210.5 359.5 C212.7 357.0 214.2 354.1 215.5 351.0 C216.8 347.9 217.8 343.0 218.4 341.0Z" fill="#efa112" stroke="#efa112" stroke-width="3.3" stroke-linejoin="round"/>
<path d="M218.4 341.0 C221.6 338.2 226.7 331.6 234.5 327.0 C242.3 322.4 258.1 316.2 265.5 313.2 C272.9 310.2 276.3 309.7 279.0 308.8 C281.2 311.6 285.8 317.6 290.0 323.0 C294.2 328.4 298.5 335.2 304.0 341.5 C309.5 347.8 316.8 353.3 323.0 361.0 C329.2 368.7 336.7 379.4 341.0 387.7 C345.3 396.0 347.6 403.3 348.6 411.0 C349.6 418.7 348.9 426.3 347.0 434.0 C345.1 441.7 342.1 448.7 337.3 457.0 C332.5 465.3 323.8 475.7 318.0 484.0 C312.2 492.3 306.6 500.6 302.3 507.0 C298.1 513.5 294.5 519.6 292.5 522.7 C289.4 521.1 283.4 517.6 277.0 514.6 C270.6 511.7 262.3 507.9 254.0 505.0 C245.7 502.1 236.0 499.3 227.0 497.5 C218.0 495.7 209.8 494.3 200.0 494.0 C190.2 493.7 174.4 495.2 168.0 495.5 C167.6 492.0 166.6 485.2 165.8 478.0 C165.0 470.8 164.4 460.3 163.2 452.0 C162.0 443.7 160.1 435.0 158.5 428.0 C156.9 421.0 154.3 414.8 153.5 410.0 C152.7 405.2 153.3 402.2 153.6 399.0 C153.9 395.8 154.4 393.2 155.5 390.5 C156.6 387.8 157.9 384.9 160.0 382.5 C162.1 380.1 164.8 377.9 168.0 376.0 C171.2 374.1 175.5 372.1 179.3 371.0 C183.1 369.9 187.2 370.1 191.0 369.3 C194.8 368.5 199.2 367.8 202.4 366.2 C205.7 364.6 208.3 362.0 210.5 359.5 C212.7 357.0 214.2 354.1 215.5 351.0 C216.8 347.9 217.8 343.0 218.4 341.0Z" fill="#ffffff"/>
<clipPath id="bodyclip"><path d="M218.4 341.0 C221.6 338.2 226.7 331.6 234.5 327.0 C242.3 322.4 258.1 316.2 265.5 313.2 C272.9 310.2 276.3 309.7 279.0 308.8 C281.2 311.6 285.8 317.6 290.0 323.0 C294.2 328.4 298.5 335.2 304.0 341.5 C309.5 347.8 316.8 353.3 323.0 361.0 C329.2 368.7 336.7 379.4 341.0 387.7 C345.3 396.0 347.6 403.3 348.6 411.0 C349.6 418.7 348.9 426.3 347.0 434.0 C345.1 441.7 342.1 448.7 337.3 457.0 C332.5 465.3 323.8 475.7 318.0 484.0 C312.2 492.3 306.6 500.6 302.3 507.0 C298.1 513.5 294.5 519.6 292.5 522.7 C289.4 521.1 283.4 517.6 277.0 514.6 C270.6 511.7 262.3 507.9 254.0 505.0 C245.7 502.1 236.0 499.3 227.0 497.5 C218.0 495.7 209.8 494.3 200.0 494.0 C190.2 493.7 174.4 495.2 168.0 495.5 C167.6 492.0 166.6 485.2 165.8 478.0 C165.0 470.8 164.4 460.3 163.2 452.0 C162.0 443.7 160.1 435.0 158.5 428.0 C156.9 421.0 154.3 414.8 153.5 410.0 C152.7 405.2 153.3 402.2 153.6 399.0 C153.9 395.8 154.4 393.2 155.5 390.5 C156.6 387.8 157.9 384.9 160.0 382.5 C162.1 380.1 164.8 377.9 168.0 376.0 C171.2 374.1 175.5 372.1 179.3 371.0 C183.1 369.9 187.2 370.1 191.0 369.3 C194.8 368.5 199.2 367.8 202.4 366.2 C205.7 364.6 208.3 362.0 210.5 359.5 C212.7 357.0 214.2 354.1 215.5 351.0 C216.8 347.9 217.8 343.0 218.4 341.0Z"/></clipPath>
<g clip-path="url(#bodyclip)" fill="#ec8585"><path d="M207 361 L211 356.5 L221 352.3 C240 373.5 280 410.5 336 462 L322 480 C300 462 270 440 262 432 C240 400 222 378 207 361Z"/><path d="M306 342 L328 364 C314 398 290 450 252 512 L200 500 C250 450 290 395 306 342Z"/></g>
<g fill="none" stroke="#f6d28e" stroke-width="2.1" stroke-linecap="round"><path d="M164.5 392 C166 384 175 380.5 183 385 C196 394 204 412 214 427 C222 439 228 448 232 460"/><path d="M162 432 C168 448 184 464 206 467 C214 468 220 467 226 466"/><path d="M167 483 C180 477 200 475 218 478"/><path d="M232 343 C240 339 250 337 258 337 M262 347 C272 343 280 341 288 340"/><path d="M232 432 C236 445 236 455 234 462"/></g>
<path d="M160.0 497.0 C161.6 496.5 163.8 495.2 168.0 494.5 C172.2 493.8 179.0 493.0 185.0 493.0 C191.0 493.0 196.8 493.6 204.0 494.5 C211.2 495.4 218.7 496.3 228.0 498.5 C237.3 500.7 251.0 504.4 260.0 507.5 C269.0 510.6 276.0 514.2 282.0 517.0 C288.0 519.8 293.2 523.0 296.0 524.5 C294.8 527.6 312.7 537.4 290.0 540.0 C267.3 542.6 186.0 540.0 160.0 540.0 C160.0 531.4 160.0 505.6 160.0 497.0Z" fill="#efa112"/>
<path d="M175.5 494 L185.5 493 C187.5 503 190 516 190.5 533.6 L181 534.4 C181 522 179 508 175.5 494Z" fill="#fdf2e2"/>
<path d="M170 518 L181 510.5 L182.5 501 L188.5 510.5 L198.5 507 L191.5 518 L187 523 L178 521Z" fill="#fdf2e2"/>
<!--FIG-END-->
<!--ART-->
  <!-- selection outline -->
  <rect x="33.9" y="34.6" width="395.3" height="734.3" fill="none" stroke="#9747ff" stroke-width="1.7"/>
  <g fill="#fff" stroke="#9747ff" stroke-width="1.4">
    <rect x="29.2" y="29.6" width="10.2" height="10.2"/>
    <rect x="423.4" y="29.6" width="10.2" height="10.2"/>
    <rect x="29.2" y="763.5" width="10.2" height="10.2"/>
    <rect x="423.4" y="763.5" width="10.2" height="10.2"/>
  </g>
  <rect x="189.7" y="778.4" width="83.1" height="23.6" rx="4" fill="#9747ff"/>
  <text x="195.8" y="796.4" textLength="70.6" lengthAdjust="spacingAndGlyphs" font-family="Liberation Sans, Arial, sans-serif" font-size="17" fill="#fff" stroke="#fff" stroke-width="0.3">227 × 423</text>
</svg>

<!-- scrollbar stub -->
<svg style="position:absolute;left:470px;top:700px;will-change:transform" width="30" height="110" viewBox="470 700 30 110"><path d="M480.7 810 V726.2 A5.3 5.3 0 0 1 491.3 726.2 V810" fill="#171717" stroke="#787878" stroke-width="1.3"/></svg>

<!-- ===== right panel ===== -->
<div id="panel"></div>

<!--PANEL-START-->
<div class="hr" style="top:37px"></div>
<div class="hr" style="top:105px"></div>
<div class="hr" style="top:261px"></div>
<div class="hr" style="top:373px"></div>
<div class="hr" style="top:441px"></div>
<div class="hr" style="top:685px"></div>
<div class="hr" style="top:752px"></div>

<!-- chips / swatches -->
<div class="chip" style="left:553px;top:-12px;width:31px;height:28px;"></div>
<div class="chip" style="left:686px;top:-12px;width:33px;height:28px;"></div>
<div class="sw" style="left:520px;top:329px;background:#f0a211;"></div>
<div class="chip" style="left:551px;top:326px;width:100px;"></div>
<div class="sw" style="left:520px;top:508px;background:#fdf3e3;"></div>
<div class="chip" style="left:551px;top:506px;width:83px;"></div>
<div class="sw" style="left:520px;top:552px;background:#c2bf88;"></div>
<div class="chip" style="left:551px;top:550px;width:189px;"></div>
<div class="sw" style="left:520px;top:596px;background:#f8d48c;"></div>
<div class="chip" style="left:551px;top:594px;width:91px;"></div>

<!-- panel text + icons -->
<svg style="position:absolute;left:498px;top:0;will-change:transform" width="334" height="805" viewBox="498 0 334 805" font-family="Liberation Sans, Arial, sans-serif" font-size="17">
  <!-- top row icons -->
  <g fill="none" stroke="#dcdcdc" stroke-width="1.5">
    <rect x="528.4" y="1.4" width="6.8" height="7.2"/>
    <path d="M539.2 -2 V13"/>
    <rect x="661.4" y="1.4" width="6.8" height="7.2"/>
    <path d="M656.5 13.2 H673"/>
  </g>
  <g fill="#fff" stroke="#fff" stroke-width="0.55">
    <text x="561.8" y="10.6" textLength="16.2" lengthAdjust="spacingAndGlyphs">14</text>
    <text x="694.6" y="10.6" textLength="17.8" lengthAdjust="spacingAndGlyphs">24</text>
  </g>
  <g fill="#fff" font-weight="bold">
    <text x="521" y="145" textLength="40" lengthAdjust="spacingAndGlyphs">Layer</text>
    <text x="521" y="301" textLength="24.5" lengthAdjust="spacingAndGlyphs">Fill</text>
    <text x="521" y="480.4" textLength="118.6" lengthAdjust="spacingAndGlyphs">Selection colors</text>
  </g>
  <g fill="#b8b8b8" font-weight="bold">
    <text x="521" y="77.6" textLength="82.2" lengthAdjust="spacingAndGlyphs">Layout grid</text>
    <text x="521" y="412.8" textLength="48" lengthAdjust="spacingAndGlyphs">Stroke</text>
    <text x="521" y="725" textLength="52.6" lengthAdjust="spacingAndGlyphs">Effects</text>
    <text x="521" y="792.4" textLength="49" lengthAdjust="spacingAndGlyphs">Export</text>
  </g>
  <g fill="#b3b3b3">
    <text x="521" y="233.4" textLength="114" lengthAdjust="spacingAndGlyphs">Selection colors</text>
    <text x="552.2" y="657.5" textLength="166" lengthAdjust="spacingAndGlyphs">See all 13 library colors</text>
  </g>
  <g fill="#fff" stroke="#fff" stroke-width="0.4">
    <text x="559.6" y="345" textLength="85" lengthAdjust="spacingAndGlyphs">background</text>
    <text x="559.6" y="524.7" textLength="69" lengthAdjust="spacingAndGlyphs">Shape/25</text>
    <text x="559.6" y="569" textLength="174" lengthAdjust="spacingAndGlyphs">Illustration/unchange/25</text>
    <text x="559.6" y="613.2" textLength="76.5" lengthAdjust="spacingAndGlyphs">Shape/100</text>
  </g>
  <!-- plus / minus -->
  <g stroke="#c4c4c4" stroke-width="1.5" fill="none">
    <path d="M789.5 72 H805.5 M797.5 64 V80"/>
    <path d="M789.5 295.5 H805.5 M797.5 287.5 V303.5"/>
    <path d="M789.5 339 H805.5"/>
    <path d="M789.5 407 H805.5 M797.5 399 V415"/>
    <path d="M789.5 719 H805.5 M797.5 711 V727"/>
    <path d="M789.5 787 H805.5 M797.5 779 V795"/>
  </g>
  <!-- layer icons -->
  <g fill="none" stroke="#d4d4d4" stroke-width="1.45" stroke-linejoin="round">
    <path d="M788.5 134.5 L795 130.8 L801.5 134.5 V145.5 L795 149.2 L788.5 145.5"/>
    <path d="M799 131.5 L805.8 135.5 V144.5 L799.5 148.6"/>
    <path d="M531.8 177.3 C528.8 181.3 527 183.8 527 186.3 A4.8 4.8 0 0 0 536.6 186.3 C536.6 183.8 534.8 181.3 531.8 177.3Z"/>
    <path d="M793 182.3 C797 176.3 805 176.3 809 182.3 C805 188.3 797 188.3 793 182.3Z"/>
    <circle cx="801" cy="182.3" r="2"/>
  </g>
  <g fill="#5c5c5c"><circle cx="531.3" cy="647" r="1"/><circle cx="531.3" cy="652.3" r="1"/><circle cx="531.3" cy="657.6" r="1"/></g>
</svg>

<!-- dropdown -->
<div id="dd"></div>
<svg style="position:absolute;left:540px;top:139px;will-change:transform" width="258" height="194" viewBox="540 139 258 194" font-family="Liberation Sans, Arial, sans-serif" font-size="17.6">
  <rect x="540" y="187" width="257.6" height="1" fill="#3b3b3b"/>
  <rect x="540" y="199.4" width="257.6" height="31.3" fill="#0d99ff"/>
  <path d="M554.6 214.6 L558.8 218.4 L565.2 210.6" fill="none" stroke="#fff" stroke-width="2.5"/>
  <g fill="#fff">
    <text x="580.8" y="166.6" textLength="97.4" lengthAdjust="spacingAndGlyphs">Auto (Yellow)</text>
    <text x="580.8" y="220.2" textLength="46.3" lengthAdjust="spacingAndGlyphs">Yellow</text>
    <text x="580.8" y="251.7" textLength="72.4" lengthAdjust="spacingAndGlyphs">Turquoise</text>
    <text x="581.2" y="283.1" textLength="31.2" lengthAdjust="spacingAndGlyphs">Blue</text>
    <text x="581.2" y="314.5" textLength="43.6" lengthAdjust="spacingAndGlyphs">Green</text>
  </g>
</svg>
<!--PANEL-END-->

</div>
</body>
</html>
